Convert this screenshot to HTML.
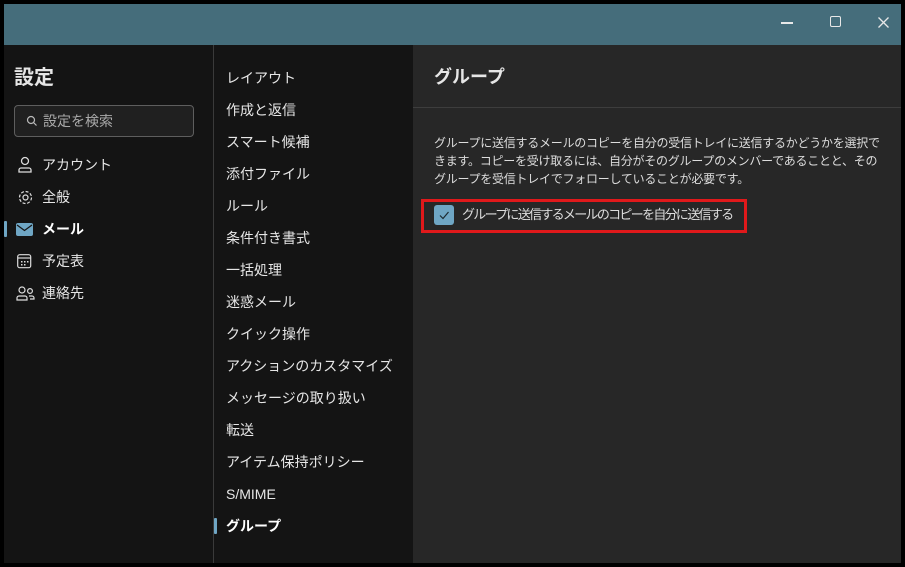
<!DOCTYPE html>
<html><head><meta charset="utf-8"><style>
*{margin:0;padding:0;box-sizing:border-box}
body{width:905px;height:567px;background:#000;position:relative;overflow:hidden;font-family:"Liberation Sans","Noto Sans CJK JP",sans-serif;color:#e6e6e6}
.tb{position:absolute;left:4px;top:4px;width:897px;height:41px;background:#456d7b}
.l{position:absolute;left:4px;top:45px;width:209px;height:518px;background:#141414}
.m{position:absolute;left:213px;top:45px;width:200px;height:518px;background:#141414;border-left:1px solid #3a3a3a}
.r{position:absolute;left:413px;top:45px;width:488px;height:518px;background:#272727}
.t{position:absolute;white-space:nowrap;font-size:14px;line-height:20px}
.bar{position:absolute;width:3px;height:16px;background:#6fa6c4;border-radius:1px}
</style></head><body>
<div class="tb">
<div style="position:absolute;left:777px;top:18px;width:12px;height:1.5px;background:#e8e8e8"></div>
<div style="position:absolute;left:826px;top:12px;width:11px;height:11px;border:1.5px solid #e8e8e8;border-radius:2px"></div>
<svg style="position:absolute;left:874px;top:13px" width="11" height="11"><path d="M0.5 0.5l10 10M10.5 0.5l-10 10" stroke="#e8e8e8" stroke-width="1.3"/></svg>
</div>
<div class="l">
<div class="t" style="left:10px;top:20px;font-size:20px;line-height:26px;font-weight:bold">設定</div>
<div style="position:absolute;left:10px;top:60px;width:180px;height:32px;border:1px solid #5e5e5e;border-radius:4px;background:#202020"></div>
<svg style="position:absolute;left:22px;top:70px" width="12" height="12"><circle cx="5" cy="5" r="3.5" fill="none" stroke="#bbb" stroke-width="1.2"/><line x1="7.5" y1="7.5" x2="10.5" y2="10.5" stroke="#bbb" stroke-width="1.2"/></svg>
<div class="t" style="left:39px;top:66px;color:#aaa">設定を検索</div>
<svg style="position:absolute;left:13px;top:111px" width="16" height="18"><circle cx="8" cy="5" r="3.5" fill="none" stroke="#ddd" stroke-width="1.3"/><path d="M2 16v-2a2 2 0 0 1 2-2h8a2 2 0 0 1 2 2v2z" fill="none" stroke="#ddd" stroke-width="1.3"/></svg>
<div class="t" style="left:38px;top:110px">アカウント</div>
<svg style="position:absolute;left:13px;top:144px" width="17" height="17"><circle cx="8.5" cy="8.5" r="2.5" fill="none" stroke="#ddd" stroke-width="1.2"/><circle cx="8.5" cy="8.5" r="6" fill="none" stroke="#ddd" stroke-width="1.2" stroke-dasharray="3 1.7"/></svg>
<div class="t" style="left:38px;top:142px">全般</div>
<div class="bar" style="left:0;top:176px"></div>
<svg style="position:absolute;left:12px;top:178px" width="18" height="14"><rect x="0" y="0" width="17" height="13" rx="2" fill="#6fa6c4"/><path d="M1 2l7.5 5.5L16 2" fill="none" stroke="#141414" stroke-width="1.2"/></svg>
<div class="t" style="left:38px;top:174px;font-weight:bold;color:#fff">メール</div>
<svg style="position:absolute;left:13px;top:209px" width="15" height="15"><rect x="0.7" y="0.7" width="13" height="13" rx="2" fill="none" stroke="#ddd" stroke-width="1.2"/><line x1="1" y1="4" x2="14" y2="4" stroke="#ddd" stroke-width="1.2"/><rect x="4" y="7" width="1.5" height="1.5" fill="#ddd"/><rect x="7" y="7" width="1.5" height="1.5" fill="#ddd"/><rect x="10" y="7" width="1.5" height="1.5" fill="#ddd"/><rect x="4" y="10" width="1.5" height="1.5" fill="#ddd"/><rect x="7" y="10" width="1.5" height="1.5" fill="#ddd"/></svg>
<div class="t" style="left:38px;top:206px">予定表</div>
<svg style="position:absolute;left:12px;top:241px" width="19" height="16"><circle cx="6" cy="4" r="3" fill="none" stroke="#ddd" stroke-width="1.2"/><circle cx="14" cy="5" r="2.4" fill="none" stroke="#ddd" stroke-width="1.2"/><path d="M1 14v-2a2 2 0 0 1 2-2h6a2 2 0 0 1 2 2v2zM13 10h3a2 2 0 0 1 2 2v1h-4" fill="none" stroke="#ddd" stroke-width="1.2"/></svg>
<div class="t" style="left:38px;top:238px">連絡先</div>
</div>
<div class="m">
<div class="t" style="left:12px;top:23px">レイアウト</div>
<div class="t" style="left:12px;top:55px">作成と返信</div>
<div class="t" style="left:12px;top:87px">スマート候補</div>
<div class="t" style="left:12px;top:119px">添付ファイル</div>
<div class="t" style="left:12px;top:151px">ルール</div>
<div class="t" style="left:12px;top:183px">条件付き書式</div>
<div class="t" style="left:12px;top:215px">一括処理</div>
<div class="t" style="left:12px;top:247px">迷惑メール</div>
<div class="t" style="left:12px;top:279px">クイック操作</div>
<div class="t" style="left:12px;top:311px">アクションのカスタマイズ</div>
<div class="t" style="left:12px;top:343px">メッセージの取り扱い</div>
<div class="t" style="left:12px;top:375px">転送</div>
<div class="t" style="left:12px;top:407px">アイテム保持ポリシー</div>
<div class="t" style="left:12px;top:439px">S/MIME</div>
<div class="bar" style="left:0;top:473px"></div>
<div class="t" style="left:12px;top:471px;font-weight:bold;color:#fff">グループ</div>
</div>
<div class="r">
<div class="t" style="left:21px;top:20px;font-size:18px;line-height:24px;font-weight:bold">グループ</div>
<div style="position:absolute;left:0;top:62px;width:488px;height:1px;background:#3d3d3d"></div>
<div class="t" style="left:21px;top:89px;font-size:12px;letter-spacing:-0.25px;line-height:18px;white-space:normal;width:446px;color:#ddd">グループに送信するメールのコピーを自分の受信トレイに送信するかどうかを選択できます。コピーを受け取るには、自分がそのグループのメンバーであることと、そのグループを受信トレイでフォローしていることが必要です。</div>
<div style="position:absolute;left:8px;top:154px;width:326px;height:34px;border:3px solid #e0191b"></div>
<div style="position:absolute;left:21px;top:160px;width:20px;height:20px;background:#6fa6c4;border-radius:3px"></div>
<svg style="position:absolute;left:21px;top:160px" width="20" height="20"><path d="M6 10.5l3 3 5.5-6.5" fill="none" stroke="#1c2a30" stroke-width="1.2"/></svg>
<div class="t" style="left:49px;top:160px;font-size:13px;letter-spacing:-1.7px;color:#ddd">グループに送信するメールのコピーを自分に送信する</div>
</div>
</body></html>
